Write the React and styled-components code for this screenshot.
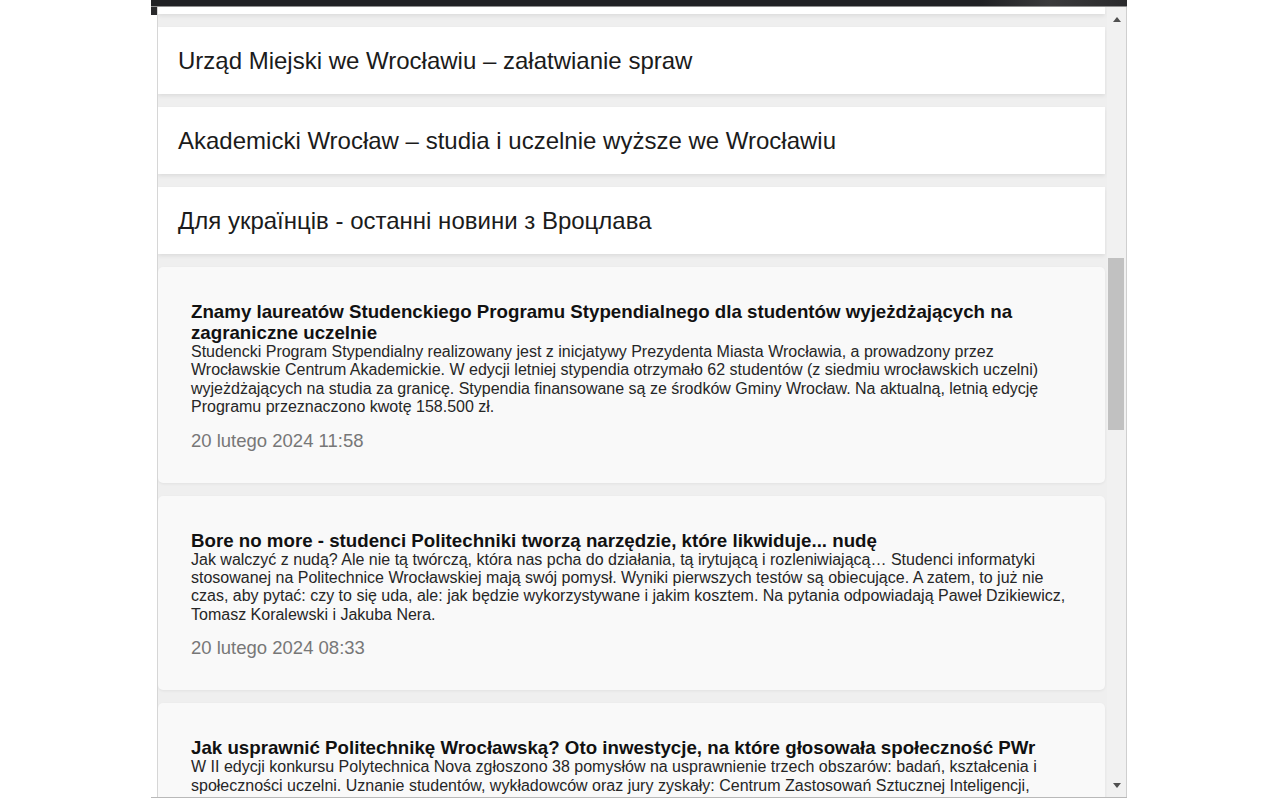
import React from 'react'
import styled, { createGlobalStyle } from 'styled-components'

const GlobalStyle = createGlobalStyle`
  html, body {
    margin: 0;
    padding: 0;
    background: #ffffff;
    font-family: "Liberation Sans", Arial, sans-serif;
  }
`

const links = [
  'Urząd Miejski we Wrocławiu – załatwianie spraw',
  'Akademicki Wrocław – studia i uczelnie wyższe we Wrocławiu',
  'Для українців - останні новини з Вроцлава',
]

const news = [
  {
    title: 'Znamy laureatów Studenckiego Programu Stypendialnego dla studentów wyjeżdżających na zagraniczne uczelnie',
    text: 'Studencki Program Stypendialny realizowany jest z inicjatywy Prezydenta Miasta Wrocławia, a prowadzony przez Wrocławskie Centrum Akademickie. W edycji letniej stypendia otrzymało 62 studentów (z siedmiu wrocławskich uczelni) wyjeżdżających na studia za granicę. Stypendia finansowane są ze środków Gminy Wrocław. Na aktualną, letnią edycję Programu przeznaczono kwotę 158.500 zł.',
    date: '20 lutego 2024 11:58',
  },
  {
    title: 'Bore no more - studenci Politechniki tworzą narzędzie, które likwiduje... nudę',
    text: 'Jak walczyć z nudą? Ale nie tą twórczą, która nas pcha do działania, tą irytującą i rozleniwiającą… Studenci informatyki stosowanej na Politechnice Wrocławskiej mają swój pomysł. Wyniki pierwszych testów są obiecujące. A zatem, to już nie czas, aby pytać: czy to się uda, ale: jak będzie wykorzystywane i jakim kosztem. Na pytania odpowiadają Paweł Dzikiewicz, Tomasz Koralewski i Jakuba Nera.',
    date: '20 lutego 2024 08:33',
  },
  {
    title: 'Jak usprawnić Politechnikę Wrocławską? Oto inwestycje, na które głosowała społeczność PWr',
    text: 'W II edycji konkursu Polytechnica Nova zgłoszono 38 pomysłów na usprawnienie trzech obszarów: badań, kształcenia i społeczności uczelni. Uznanie studentów, wykładowców oraz jury zyskały: Centrum Zastosowań Sztucznej Inteligencji, strefa relaksu dla studentów oraz nowe laboratorium dydaktyczne.',
    date: '19 lutego 2024 14:20',
  },
]

export default function App() {
  return (
    <>
      <GlobalStyle />
      <Page>
        <Frame>
          <BrowserStrip />
          <PopupRow>
            <Edge />
            <Popup>
              <Feed>
                <CutCard />
                {links.map((label) => (
                  <LinkCard key={label}>{label}</LinkCard>
                ))}
                {news.map((item) => (
                  <NewsCard key={item.title}>
                    <NewsTitle>{item.title}</NewsTitle>
                    <NewsText>{item.text}</NewsText>
                    <NewsDate>{item.date}</NewsDate>
                  </NewsCard>
                ))}
              </Feed>
              <Scrollbar>
                <ArrowButton><Arrow $dir="up" /></ArrowButton>
                <Track>
                  <Thumb $offset={227} $size={172} />
                </Track>
                <ArrowButton><Arrow $dir="down" /></ArrowButton>
              </Scrollbar>
            </Popup>
          </PopupRow>
        </Frame>
      </Page>
    </>
  )
}

const Page = styled.div`
  width: 1280px;
  height: 800px;
  overflow: hidden;
  background: #ffffff;
  padding-left: 151px;
  box-sizing: border-box;
`

const Frame = styled.div`
  width: 976px;
  display: flex;
  flex-direction: column;
`

const BrowserStrip = styled.div`
  height: 6px;
  background: linear-gradient(90deg, #202124 0%, #202124 85%, #3a3a3c 92%, #2a2a2c 100%);
  border-bottom: 1px solid #8e8e8e;
`

const PopupRow = styled.div`
  display: flex;
  height: 790px;
  border-bottom: 1px solid #b9b9b9;
`

const Edge = styled.div`
  width: 6px;
  background: linear-gradient(180deg, #2a2a2c 0px, #2a2a2c 8px, #ffffff 8px);
`

const Popup = styled.div`
  flex: 1;
  display: flex;
  border-left: 1px solid #d6d6d6;
  background: #efefef;
  overflow: hidden;
`

const Feed = styled.div`
  flex: 1;
  display: flex;
  flex-direction: column;
  gap: 13px;
  padding-right: 2px;
  overflow: hidden;

  & > * {
    flex-shrink: 0;
  }
`

const CutCard = styled.div`
  height: 7px;
  background: #ffffff;
  box-shadow: 0 2px 4px rgba(0, 0, 0, 0.08);
`

const LinkCard = styled.div`
  height: 67px;
  display: flex;
  align-items: center;
  padding: 0 20px;
  background: #ffffff;
  box-shadow: 0 2px 4px rgba(0, 0, 0, 0.08);
  color: #1b1b1b;
  font-size: 24px;
`

const NewsCard = styled.div`
  padding: 34px 36px 32px 33px;
  background: #f9f9f9;
  border-radius: 5px;
  box-shadow: 0 1px 3px rgba(0, 0, 0, 0.06);
`

const NewsTitle = styled.h3`
  margin: 0;
  font-size: 18.72px;
  line-height: 21px;
  font-weight: bold;
  color: #111111;
`

const NewsText = styled.p`
  margin: 0;
  font-size: 16px;
  line-height: 18.4px;
  color: #262626;
`

const NewsDate = styled.div`
  margin-top: 13px;
  font-size: 18.5px;
  line-height: 21px;
  color: #777777;
`

const Scrollbar = styled.div`
  width: 19px;
  display: flex;
  flex-direction: column;
  background: #f1f1f1;
  border-right: 1px solid #cfcfcf;
`

const ArrowButton = styled.div`
  height: 24px;
  display: flex;
  align-items: center;
  justify-content: center;
`

const Arrow = styled.span`
  width: 0;
  height: 0;
  border-left: 4px solid transparent;
  border-right: 4px solid transparent;
  ${({ $dir }) => ($dir === 'up'
    ? 'border-bottom: 5px solid #505050;'
    : 'border-top: 5px solid #505050;')}
`

const Track = styled.div`
  flex: 1;
  display: flex;
  flex-direction: column;
`

const Thumb = styled.div`
  margin: ${({ $offset }) => $offset}px 2px 0 1px;
  height: ${({ $size }) => $size}px;
  background: #c1c1c1;
`
